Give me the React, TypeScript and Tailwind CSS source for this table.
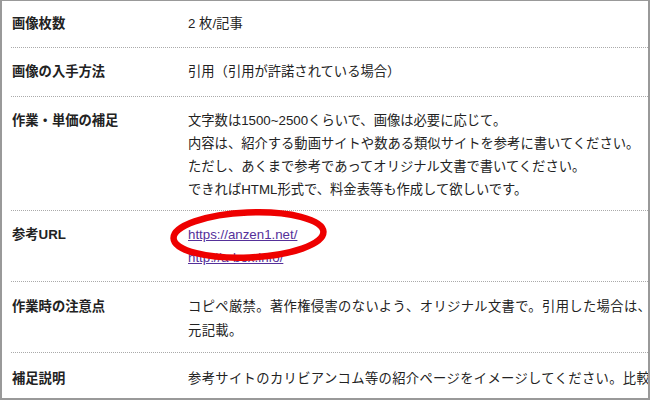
import type { ReactNode } from 'react'

type Row = {
  label: string
  body: ReactNode
  pad: string
  wide?: boolean
}

const rows: Row[] = [
  { label: '画像枚数', body: '2 枚/記事', pad: 'pt-[11px] pb-[12px]' },
  { label: '画像の入手方法', body: '引用（引用が許諾されている場合）', pad: 'pt-[12px] pb-[12px]' },
  {
    label: '作業・単価の補足',
    body: (
      <>
        文字数は1500~2500くらいで、画像は必要に応じて。<br />
        内容は、紹介する動画サイトや数ある類似サイトを参考に書いてください。<br />
        ただし、あくまで参考であってオリジナル文書で書いてください。<br />
        できればHTML形式で、料金表等も作成して欲しいです。
      </>
    ),
    pad: 'pt-[12px] pb-[8px]',
  },
  {
    label: '参考URL',
    body: (
      <>
        <a href="#" className="text-[#55309a] underline">https://anzen1.net/</a><br />
        <a href="#" className="text-[#55309a] underline">http://a-box.info/</a>
      </>
    ),
    pad: 'pt-[12px] pb-[12px]',
  },
  {
    label: '作業時の注意点',
    body: (
      <>
        コピペ厳禁。著作権侵害のないよう、オリジナル文書で。引用した場合は、引用<br />
        元記載。
      </>
    ),
    pad: 'pt-[13px] pb-[10px]',
    wide: true,
  },
  {
    label: '補足説明',
    body: '参考サイトのカリビアンコム等の紹介ページをイメージしてください。比較サイトのような形式でも構いません。',
    pad: 'pt-[14px] pb-[12px]',
    wide: true,
  },
]

export default function App() {
  return (
    <div
      className="relative w-[650px] h-[400px] overflow-hidden bg-white border-[#999] border-t border-l-2 border-r-2 border-b-2 text-[#222] text-[13.3px] leading-[23.3px]"
      style={{ fontFamily: '"Liberation Sans", "Noto Sans CJK JP", sans-serif' }}
    >
      <div className="pl-[9px] w-[720px]">
        {rows.map((r, i) => (
          <div key={i} className={`flex border-b border-dotted border-[#aaa] ${r.pad}`}>
            <div className="w-[177px] shrink-0 pl-[1px] font-bold">{r.label}</div>
            <div className={r.wide ? 'whitespace-nowrap tracking-[0.35px]' : 'whitespace-nowrap'}>{r.body}</div>
          </div>
        ))}
      </div>

      {/* red marker round the first URL */}
      <svg className="absolute left-0 top-0 pointer-events-none" width="650" height="400">
        <ellipse
          cx="246.5"
          cy="234"
          rx="75"
          ry="22.5"
          fill="none"
          stroke="#ee0000"
          strokeWidth="6.5"
          transform="rotate(-2.5 246.5 234)"
        />
      </svg>
    </div>
  )
}
